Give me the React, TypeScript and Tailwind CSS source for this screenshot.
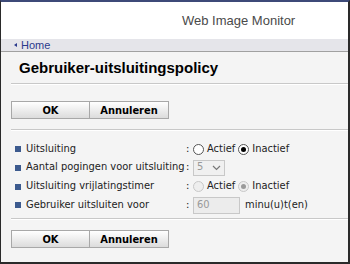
import React from 'react';

const labelFont = { fontFamily: '"DejaVu Sans Condensed", Tahoma, "DejaVu Sans", sans-serif' };
const arial = { fontFamily: '"Liberation Sans", Arial, sans-serif' };

function Buttons() {
  return (
    <div className="flex pl-[10px]">
      <button className="h-[18px] w-[79px] border border-[#a8a8a8] bg-gradient-to-b from-white to-[#dcdcdc] text-[11px] font-bold leading-none text-black">
        OK
      </button>
      <button className="h-[18px] w-[79px] border border-l-0 border-[#a8a8a8] bg-gradient-to-b from-white to-[#dcdcdc] text-[11px] font-bold leading-none text-black">
        Annuleren
      </button>
    </div>
  );
}

function Radio({ checked, disabled }: { checked?: boolean; disabled?: boolean }) {
  return (
    <span
      className={`inline-flex h-[11px] w-[11px] items-center justify-center rounded-full border ${
        disabled ? 'border-[#c8c8c8] bg-[#eeeeee]' : 'border-[#555] bg-white'
      }`}
    >
      {checked && (
        <span className={`h-[5px] w-[5px] rounded-full ${disabled ? 'bg-[#9a9a9a]' : 'bg-black'}`} />
      )}
    </span>
  );
}

function Row({ label, h, children }: { label: string; h: string; children: React.ReactNode }) {
  return (
    <div className={`flex items-center ${h}`}>
      <span className="ml-[14px] h-[6px] w-[6px] bg-[#3c5a8e]" />
      <span className="ml-[5px] w-[160px] text-[11px] text-[#222]">{label}</span>
      <span className="w-[7px] text-[11px] text-[#222]">:</span>
      <div className="flex items-center gap-[3px] text-[11px] text-[#222]">{children}</div>
    </div>
  );
}

export default function App() {
  return (
    <div
      className="flex h-[264px] w-[350px] flex-col border-t-2 border-r-2 border-b-2 border-l border-t-[#3d4a78] border-r-[#2a2a2a] border-b-[#2a2a2a] border-l-[#2a2a2a] bg-[#f4f4f4]"
      style={labelFont}
    >
      <div className="flex h-[37px] items-center bg-white pl-[181px]">
        <span className="text-[13px] text-[#4a4a4a]" style={arial}>
          Web Image Monitor
        </span>
      </div>
      <div className="flex h-[13px] items-center border-b border-[#a0a0a0] bg-[#e5e5ea] pl-[13px]">
        <span className="mr-[4px] h-0 w-0 border-y-[2.5px] border-r-[3px] border-y-transparent border-r-[#2b3a8c]" />
        <span className="text-[11px] leading-none text-[#2b3a8c]" style={arial}>
          Home
        </span>
      </div>
      <div className="pl-[18px] pt-[6px]">
        <h1 className="text-[15px] font-bold leading-[20px] text-black" style={arial}>
          Gebruiker-uitsluitingspolicy
        </h1>
      </div>
      <div className="ml-[10px] mt-[5px] h-[2px] border-t border-[#c8c8c8] bg-white" />
      <div className="mt-[16px]">
        <Buttons />
      </div>
      <div className="ml-[10px] mt-[10px] h-[2px] border-t border-[#c8c8c8] bg-white" />
      <div className="mt-[9px] flex flex-col">
        <Row label="Uitsluiting" h="h-[18px]">
          <Radio />
          <span>Actief</span>
          <Radio checked />
          <span>Inactief</span>
        </Row>
        <Row label="Aantal pogingen voor uitsluiting" h="h-[19px]">
          <div className="flex h-[16px] w-[32px] items-center justify-between border border-[#c8c8c8] bg-[#f0f0f0] px-[3px] text-[#999]">
            <span>5</span>
            <svg width="9" height="6" viewBox="0 0 9 6" fill="none" stroke="#777" strokeWidth="1.2">
              <path d="M1 1 L4.5 4.5 L8 1" />
            </svg>
          </div>
        </Row>
        <Row label="Uitsluiting vrijlatingstimer" h="h-[19px]">
          <Radio disabled />
          <span>Actief</span>
          <Radio checked disabled />
          <span>Inactief</span>
        </Row>
        <Row label="Gebruiker uitsluiten voor" h="h-[18px]">
          <div className="flex h-[17px] w-[47px] items-center border border-[#c8c8c8] bg-[#ececec] px-[3px] text-[#999]">
            60
          </div>
          <span className="ml-[2px]">minu(u)t(en)</span>
        </Row>
      </div>
      <div className="ml-[10px] mt-[4px] h-[2px] border-t border-[#c8c8c8] bg-white" />
      <div className="mt-[10px]">
        <Buttons />
      </div>
    </div>
  );
}
